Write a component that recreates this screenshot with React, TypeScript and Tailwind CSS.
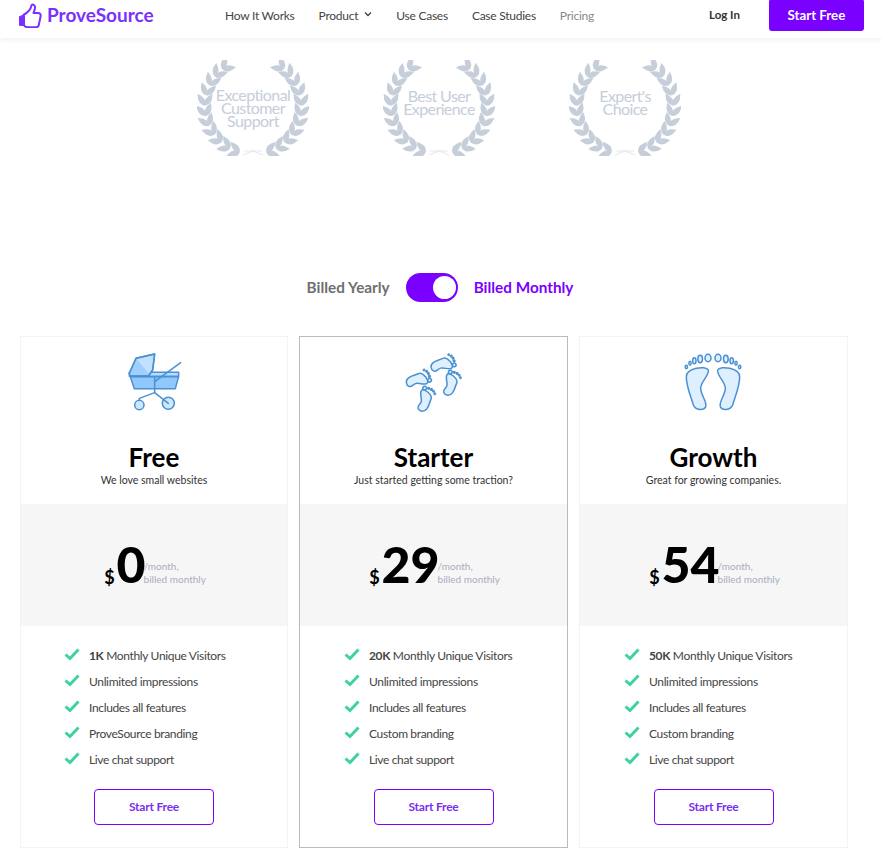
const plans = [
  {
    name: 'Free',
    tagline: 'We love small websites',
    price: '0',
    visitors: '1K',
    branding: 'ProveSource branding',
    icon: 'pram',
    featured: false,
  },
  {
    name: 'Starter',
    tagline: 'Just started getting some traction?',
    price: '29',
    visitors: '20K',
    branding: 'Custom branding',
    icon: 'steps',
    featured: true,
  },
  {
    name: 'Growth',
    tagline: 'Great for growing companies.',
    price: '54',
    visitors: '50K',
    branding: 'Custom branding',
    icon: 'feet',
    featured: false,
  },
];

const awards = [
  ['Exceptional', 'Customer', 'Support'],
  ['Best User', 'Experience'],
  ["Expert's", 'Choice'],
];

function Logo() {
  return (
    <svg width="24" height="25" viewBox="0 0 24 25" fill="none">
      <path d="M1 13.5 L6 11 V23 H2.5 C1.5 23 1 22.5 1 21.5 Z" fill="#7a30ff" />
      <path
        d="M6 11.5 C9 10 12.5 7 13.5 2.5 C14 1 16.5 1.5 17 3.5 C17.5 6 16 8 15.5 10 H20 C22 10 23 11.5 22.6 13.2 L20.8 22 C20.5 23.5 19.5 24.3 18 24.3 H10 C8 24.3 6.5 23.5 6 22 Z"
        stroke="#7a30ff"
        strokeWidth="2"
        strokeLinejoin="round"
      />
    </svg>
  );
}

function Wreath() {
  const leaves = [];
  const cx = 56;
  const cy = 46;
  const r = 48;
  for (let i = 0; i < 11; i++) {
    const deg = 106 + i * 12.4;
    const a = (deg * Math.PI) / 180;
    const x = cx + r * Math.cos(a);
    const y = cy + r * Math.sin(a);
    leaves.push({ x, y, rot: deg + 90 + 32, key: `o${i}` });
    leaves.push({ x, y, rot: deg + 90 - 32, key: `i${i}` });
  }
  return (
    <svg width="112" height="96" viewBox="0 0 112 96">
      {[0, 1].map((side) => (
        <g key={side} transform={side ? 'matrix(-1 0 0 1 112 0)' : undefined}>
          {leaves.map((l) => (
            <path
              key={l.key}
              d="M0 0 Q5 -6 14 0 Q5 6 0 0 Z"
              fill="#c5ced9"
              transform={`translate(${l.x} ${l.y}) rotate(${l.rot})`}
            />
          ))}
        </g>
      ))}
      <path d="M46 95 L56 91 L66 95 M47 91 H65" stroke="#e3e7ec" strokeWidth="1" fill="none" />
    </svg>
  );
}

function Pram() {
  return (
    <svg width="108" height="80" viewBox="0 0 324 240" fill="none" stroke="#4a90d2" strokeWidth="4.5" strokeLinejoin="round" strokeLinecap="round">
      <path d="M91 110 H236 L226 146 H103 Z" fill="#90c8fb" />
      <path d="M88 97 H236 V109 H88 Z" fill="#b9dcff" />
      <path d="M88 100 L108 55 L164 42 L158 90 L145 108 H90 Z" fill="#c2e0ff" />
      <path d="M108 55 L150 105 H90 L88 100 Z" fill="#9fcffc" stroke="none" />
      <path d="M88 100 L108 55 L164 42 L158 90 L145 108 H90 Z" />
      <path d="M164 110 V158 L118 175 V195 M164 125 L242 68" />
      <circle cx="118" cy="195" r="14" fill="#cfe7ff" />
      <circle cx="205" cy="190" r="18" fill="#cfe7ff" />
      <path d="M164 158 L205 190" />
    </svg>
  );
}

function Foot() {
  return (
    <g fill="#deefff" stroke="#4a90d2" strokeWidth="4.5">
      <path d="M52 110 C52 85 110 75 118 90 C122 105 95 125 95 145 C95 165 115 185 110 200 C105 212 80 212 73 195 C66 170 52 140 52 110 Z" />
      <ellipse cx="117" cy="54" rx="9" ry="11" />
      <ellipse cx="93.5" cy="57" rx="7" ry="11" />
      <ellipse cx="76" cy="62" rx="5" ry="9" />
      <ellipse cx="63" cy="70" rx="3.5" ry="6" />
      <ellipse cx="52" cy="81" rx="3.5" ry="5" />
    </g>
  );
}

function Feet() {
  return (
    <svg width="90" height="80" viewBox="0 0 270 240">
      <Foot />
      <g transform="matrix(-1 0 0 1 264 0)">
        <Foot />
      </g>
    </svg>
  );
}

function Steps() {
  const spots = [
    { x: 164, y: 74, rot: 63, flip: 1 },
    { x: 90, y: 120, rot: 63, flip: 1 },
    { x: 184, y: 128, rot: 28, flip: -1 },
    { x: 107, y: 176, rot: 28, flip: -1 },
  ];
  return (
    <svg width="90" height="80" viewBox="0 0 270 240">
      {spots.map((s) => (
        <g
          key={`${s.x}-${s.y}`}
          transform={`translate(${s.x} ${s.y}) rotate(${s.rot}) scale(${s.flip} 1)`}
          fill="#deefff"
          stroke="#4a90d2"
          strokeWidth="4.5"
        >
          <path d="M-18 -6 C-18 -22 18 -28 20 -17 C22 -6 7 2 5 13 C3 22 10 28 4 35 C-4 42 -18 38 -20 24 C-22 12 -18 6 -18 -6 Z" />
          <circle cx="15" cy="-28" r="5.5" />
          <circle cx="4" cy="-33" r="2.6" />
          <circle cx="-5" cy="-34" r="2.4" />
          <circle cx="-13" cy="-32" r="2.2" />
          <circle cx="-20" cy="-27" r="2" />
        </g>
      ))}
    </svg>
  );
}

function PlanIcon({ icon }: { icon: string }) {
  if (icon === 'pram') return <Pram />;
  if (icon === 'steps') return <Steps />;
  return <Feet />;
}

function Check() {
  return (
    <svg width="16" height="13" viewBox="0 0 16 13" className="mt-[-3px] shrink-0">
      <path d="M1.5 6.5 L6 10.5 L14.5 1.5" fill="none" stroke="#3fd1a5" strokeWidth="3" />
    </svg>
  );
}

function PlanCard({ plan }: { plan: (typeof plans)[number] }) {
  const features = ['Unlimited impressions', 'Includes all features', plan.branding, 'Live chat support'];
  return (
    <div className={`h-[512px] border ${plan.featured ? 'border-[#bbbbbb]' : 'border-[#f3f3f3]'}`}>
      <div className="flex h-[167px] flex-col items-center pt-[3px]">
        <PlanIcon icon={plan.icon} />
        <h3 className="mt-[21px] text-[26px] leading-[32px] font-bold text-black">{plan.name}</h3>
        <p className="text-[10.5px] leading-[14px] text-[#333]">{plan.tagline}</p>
      </div>
      <div className="flex h-[122px] items-center justify-center bg-[#f6f6f6] pl-[2px]">
        <span className="mt-[24px] mr-[2px] text-[18px] font-bold text-black">$</span>
        <span className="mr-[-2px] mb-[2px] text-[50px] leading-none font-black text-black">{plan.price}</span>
        <span className="mt-[16px] text-[10px] leading-[13px] text-[#a9adc0]">
          /month,
          <br />
          billed monthly
        </span>
      </div>
      <div className={`pt-[17px] ${plan.name === 'Free' ? 'pl-[43px]' : 'pl-[44px]'}`}>
        <div className="flex h-[26px] items-center gap-[9px] text-[12px] tracking-[-0.35px] text-[#444]">
          <Check />
          <span>
            <b className="font-bold">{plan.visitors}</b> Monthly Unique Visitors
          </span>
        </div>
        {features.map((f) => (
          <div key={f} className="flex h-[26px] items-center gap-[9px] text-[12px] tracking-[-0.35px] text-[#444]">
            <Check />
            <span>{f}</span>
          </div>
        ))}
      </div>
      <div className="mt-[16px] flex justify-center">
        <button className="h-[36px] w-[120px] rounded-[4px] border border-[#7a00ff] bg-white text-[12px] font-bold tracking-[-0.2px] text-[#7a2ff0]">
          Start Free
        </button>
      </div>
    </div>
  );
}

export default function App() {
  return (
    <div className="h-[858px] overflow-hidden bg-white font-[Lato,sans-serif]">
      <header className="flex h-[38px] items-center pl-[18px] shadow-[0_2px_6px_rgba(0,0,0,0.06)]">
        <div className="mb-[8px] flex w-[207px] shrink-0 items-center gap-[5px]">
          <Logo />
          <span className="text-[19px] font-bold text-[#7a30ff]">ProveSource</span>
        </div>
        <nav className="mb-[7px] flex shrink-0 items-center gap-[24px] text-[12px] tracking-[-0.25px] whitespace-nowrap text-[#444]">
          <a>How It Works</a>
          <a className="flex items-center gap-[6px]">
            Product
            <svg width="8" height="6" viewBox="0 0 8 6" className="mb-[4px]">
              <path d="M1 1.5 L4 4.5 L7 1.5" fill="none" stroke="#444" strokeWidth="1.4" />
            </svg>
          </a>
          <a>Use Cases</a>
          <a>Case Studies</a>
          <a className="text-[#888]">Pricing</a>
        </nav>
        <a className="mb-[8px] ml-[115px] shrink-0 text-[11.5px] font-bold whitespace-nowrap text-[#333]">Log In</a>
        <button className="mt-[-8px] ml-[29px] h-[32px] w-[95px] shrink-0 rounded-[3px] bg-[#7a00ff] pt-[1px] text-[13.3px] font-bold text-white">
          Start Free
        </button>
      </header>

      <section className="mt-[22px] flex justify-center gap-[74px] pr-[4px]">
        {awards.map((lines) => (
          <div key={lines[0]} className="relative h-[96px] w-[112px]">
            <Wreath />
            <div
              className={`absolute inset-0 flex flex-col items-center text-[16px] leading-[13px] tracking-[-0.6px] text-[#c5ced9] ${
                lines.length === 3 ? 'pt-[28px]' : 'pt-[29px]'
              }`}
            >
              {lines.map((l) => (
                <span key={l}>{l}</span>
              ))}
            </div>
          </div>
        ))}
      </section>

      <section className="mt-[117px] flex items-center justify-center pr-[2px]">
        <span className="mt-[-1px] text-[15.3px] font-bold text-[#6f6f6f]">Billed Yearly</span>
        <span className="mx-[16px] flex h-[29px] w-[52px] items-center justify-end rounded-full bg-[#7a00ff] pr-[2px]">
          <span className="h-[23px] w-[23px] rounded-full bg-white" />
        </span>
        <span className="mt-[-1px] text-[15.3px] font-bold text-[#7a00ff]">Billed Monthly</span>
      </section>

      <section className="mt-[34px] ml-[20px] grid w-[828px] grid-cols-[268px_269px_269px] gap-[11px]">
        {plans.map((p) => (
          <PlanCard key={p.name} plan={p} />
        ))}
      </section>
    </div>
  );
}
